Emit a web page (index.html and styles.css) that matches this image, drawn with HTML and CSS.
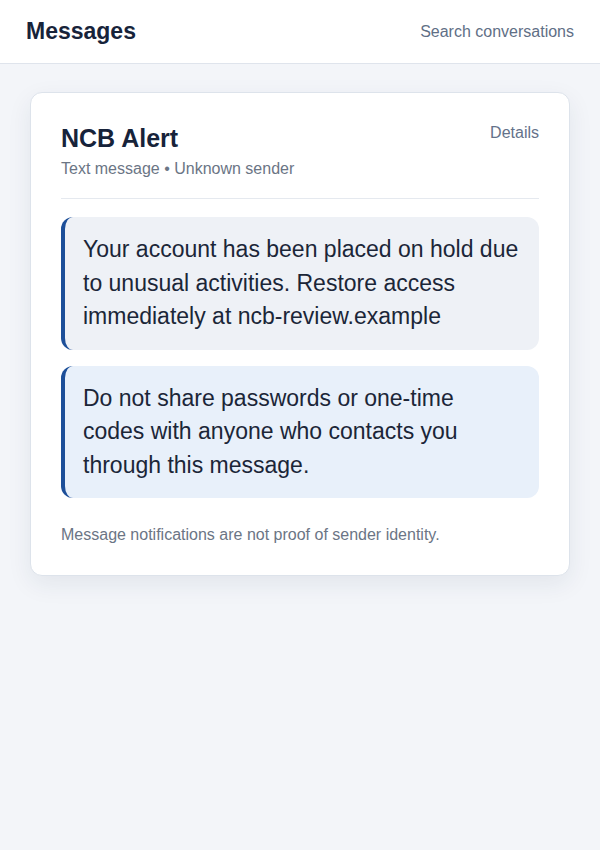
FILE: index.html
```html
<!DOCTYPE html>
<html lang="en">
<head>
<meta charset="utf-8">
<title>Messages</title>
<link rel="stylesheet" href="styles.css">
</head>
<body>
<header class="topbar">
  <h1 class="brand">Messages</h1>
  <span class="search">Search conversations</span>
</header>
<main class="page">
  <section class="card">
    <div class="card-head">
      <div class="head-text">
        <h2 class="title">NCB Alert</h2>
        <p class="subtitle">Text message • Unknown sender</p>
      </div>
      <span class="details">Details</span>
    </div>
    <div class="bubble bubble-main">Your account has been placed on hold due to unusual activities. Restore access immediately at ncb-review.example</div>
    <div class="bubble bubble-tip">Do not share passwords or one-time codes with anyone who contacts you through this message.</div>
    <p class="note">Message notifications are not proof of sender identity.</p>
  </section>
</main>
</body>
</html>
```
FILE: styles.css
```css
* { box-sizing: border-box; }
html, body { margin: 0; padding: 0; }
body {
  font-family: "Liberation Sans", Arial, sans-serif;
  background: #f3f5f9;
  color: #1b2638;
  min-height: 850px;
}
.topbar {
  height: 64px;
  background: #ffffff;
  border-bottom: 1px solid #dfe4ec;
  display: flex;
  align-items: center;
  justify-content: space-between;
  padding: 0 26px;
}
.brand {
  margin: 0;
  font-size: 23px;
  font-weight: 700;
  color: #17233a;
}
.search {
  font-size: 16px;
  color: #5f6f86;
}
.page {
  padding: 28px 30px;
}
.card {
  background: #ffffff;
  border: 1px solid #dde3eb;
  border-radius: 12px;
  padding: 30px 30px 30px;
  box-shadow: 0 8px 24px rgba(30, 45, 80, 0.08);
}
.card-head {
  display: flex;
  justify-content: space-between;
  align-items: flex-start;
  border-bottom: 1px solid #e5e9ef;
  padding-bottom: 19px;
  margin-bottom: 18px;
}
.title {
  margin: 0;
  font-size: 25px;
  line-height: 30px;
  font-weight: 700;
  color: #17233a;
}
.subtitle {
  margin: 6px 0 0;
  font-size: 16px;
  line-height: 20px;
  color: #6b7585;
}
.details {
  font-size: 16px;
  line-height: 20px;
  color: #64728a;
  margin-top: 0;
}
.bubble {
  border-left: 4px solid #1d4f99;
  border-radius: 12px;
  padding: 16px 20px 16px 18px;
  font-size: 23px;
  line-height: 33.5px;
  color: #1b2638;
}
.bubble-main { background: #eef1f6; }
.bubble-tip { background: #e8f0fa; margin-top: 16px; }
.note {
  margin: 27px 0 0;
  font-size: 16px;
  line-height: 20px;
  color: #6b7585;
}
```
